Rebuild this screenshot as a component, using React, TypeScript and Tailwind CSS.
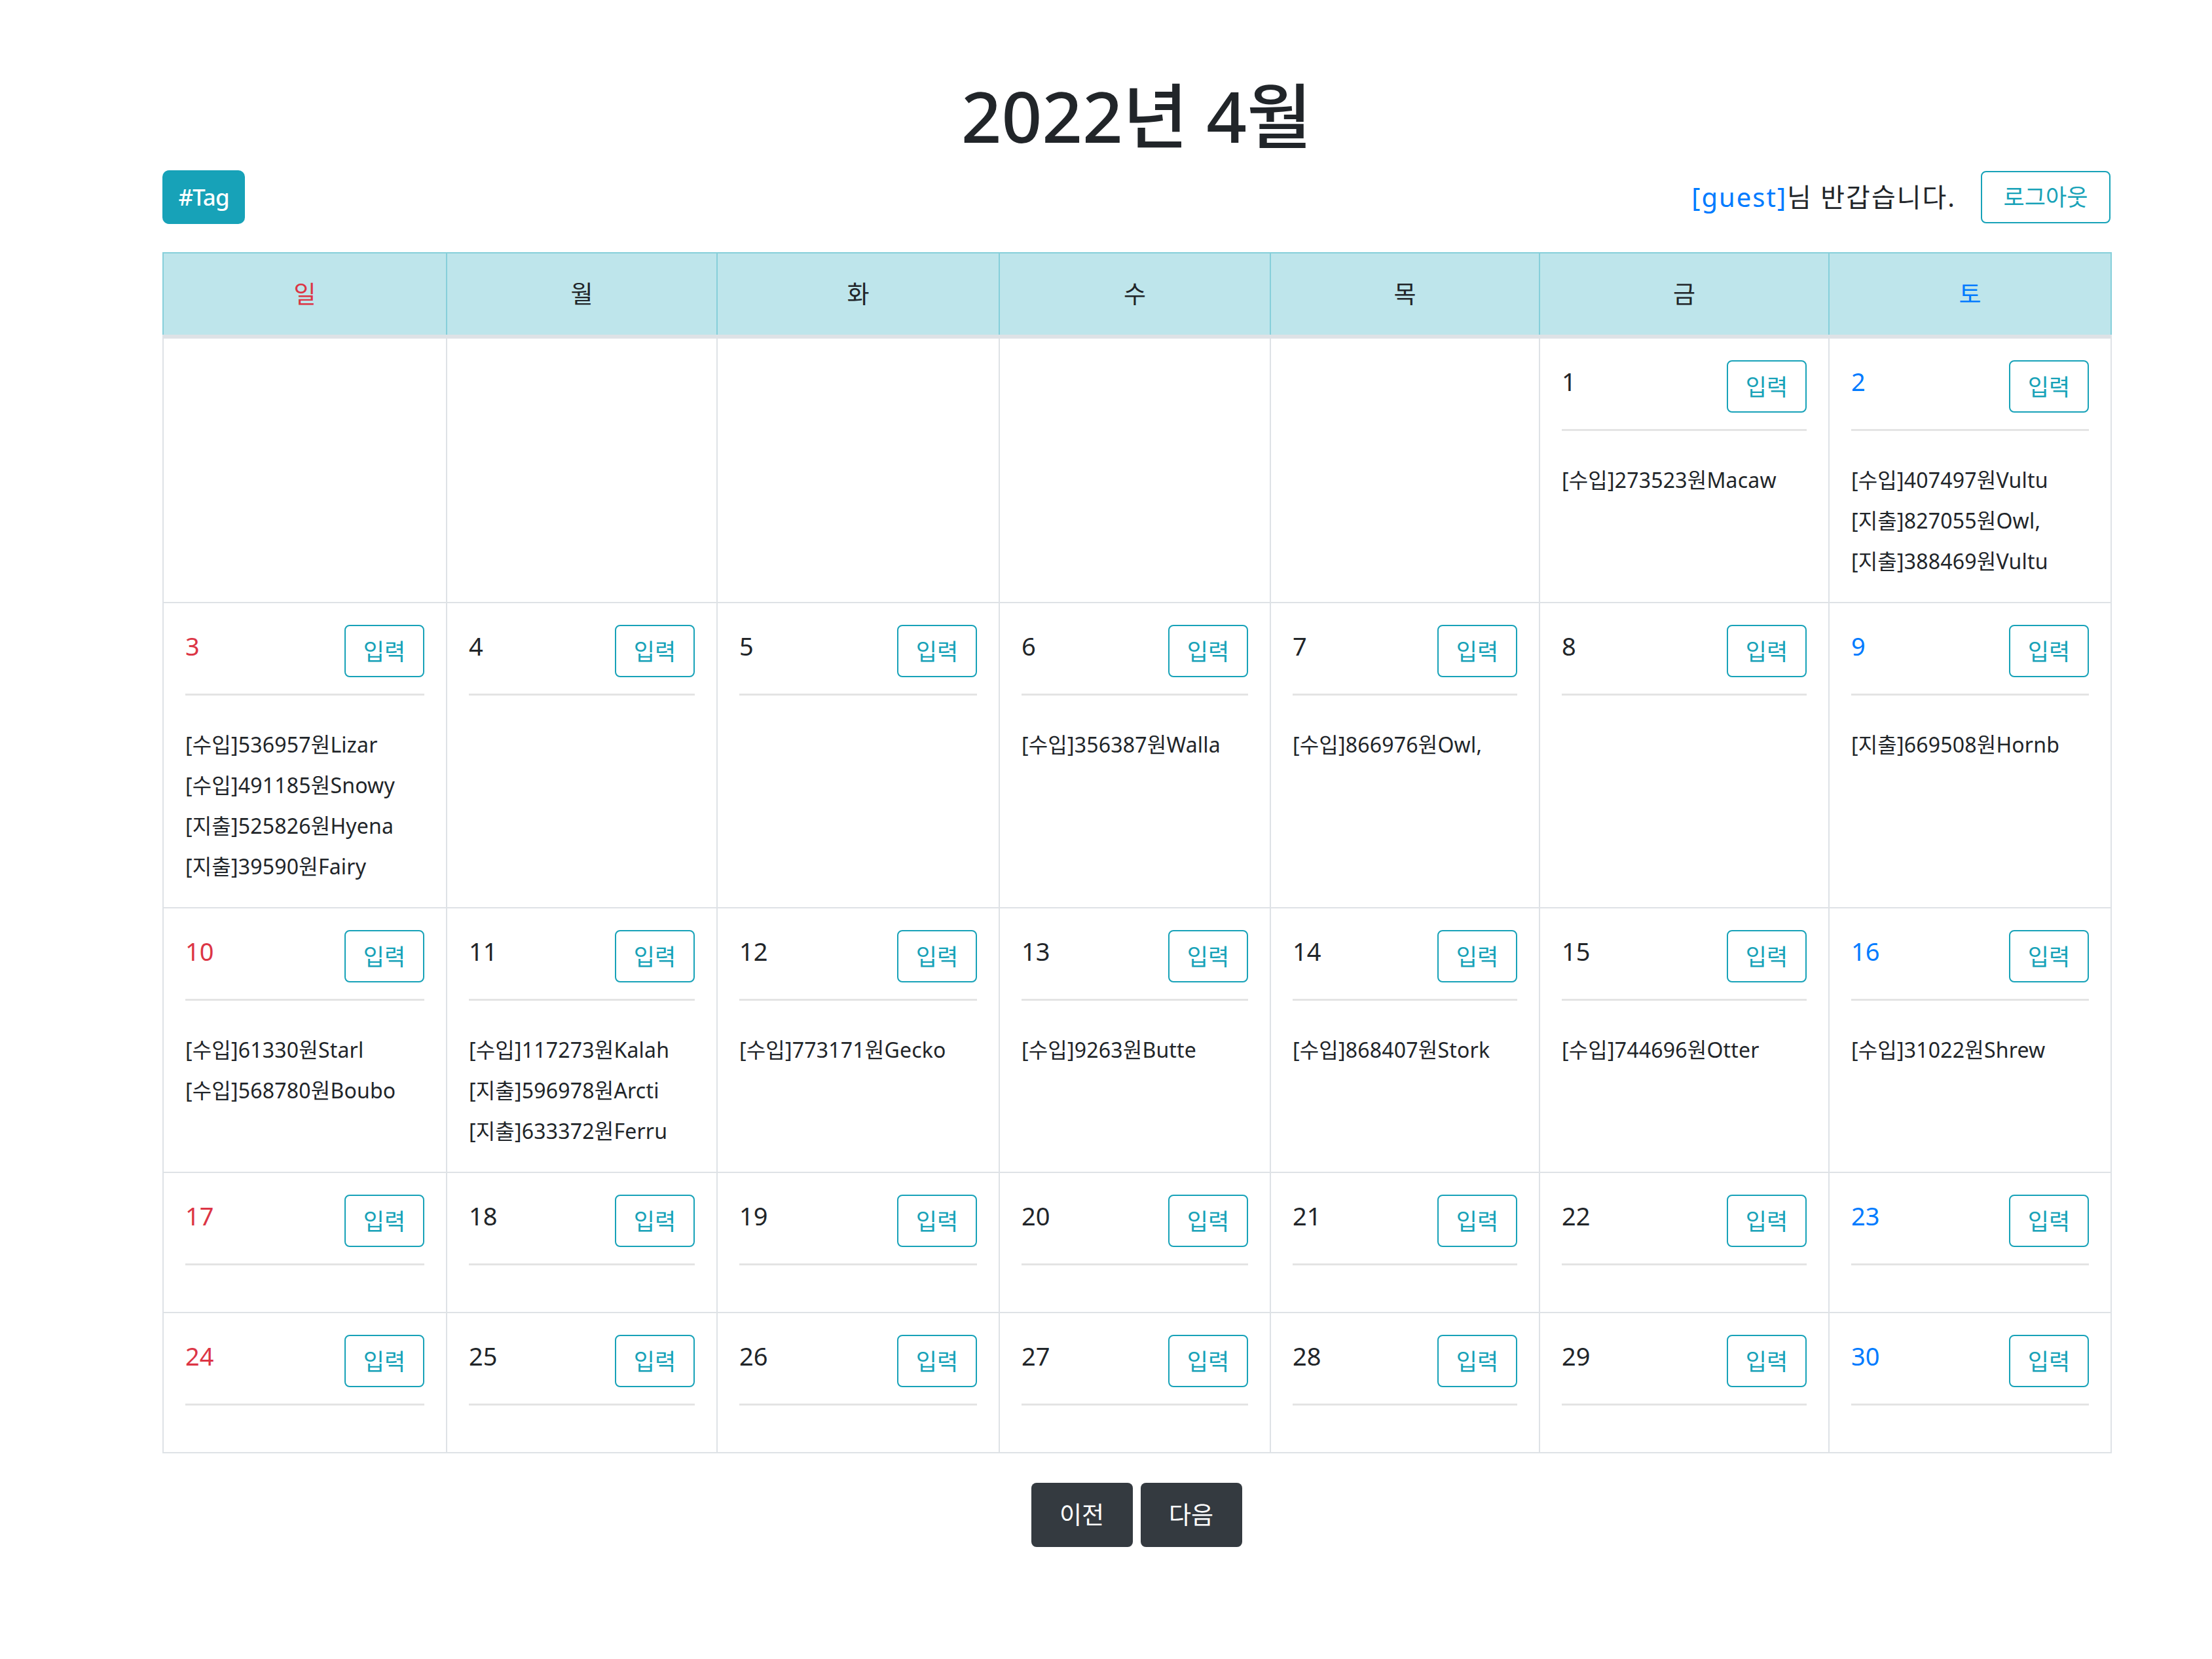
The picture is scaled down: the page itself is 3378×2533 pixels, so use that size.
import React from 'react';

interface Day {
  day: number;
  entries: string[];
}

const WEEKDAYS = ['일', '월', '화', '수', '목', '금', '토'];
const COL_WIDTHS = ['w-[433px]', 'w-[413px]', 'w-[431px]', 'w-[414px]', 'w-[411px]', 'w-[442px]', 'w-[431px]'];

const ENTRIES: Record<number, string[]> = {
  1: ['[수입]273523원Macaw'],
  2: ['[수입]407497원Vultu', '[지출]827055원Owl,', '[지출]388469원Vultu'],
  3: ['[수입]536957원Lizar', '[수입]491185원Snowy', '[지출]525826원Hyena', '[지출]39590원Fairy'],
  6: ['[수입]356387원Walla'],
  7: ['[수입]866976원Owl,'],
  9: ['[지출]669508원Hornb'],
  10: ['[수입]61330원Starl', '[수입]568780원Boubo'],
  11: ['[수입]117273원Kalah', '[지출]596978원Arcti', '[지출]633372원Ferru'],
  12: ['[수입]773171원Gecko'],
  13: ['[수입]9263원Butte'],
  14: ['[수입]868407원Stork'],
  15: ['[수입]744696원Otter'],
  16: ['[수입]31022원Shrew'],
};

// April 2022 starts on Friday
function buildWeeks(): (Day | null)[][] {
  const cells: (Day | null)[] = [];
  for (let i = 0; i < 5; i++) cells.push(null);
  for (let d = 1; d <= 30; d++) cells.push({ day: d, entries: ENTRIES[d] || [] });
  const weeks: (Day | null)[][] = [];
  for (let i = 0; i < cells.length; i += 7) weeks.push(cells.slice(i, i + 7));
  return weeks;
}

function dayColor(col: number) {
  if (col === 0) return 'text-[#dc3545]';
  if (col === 6) return 'text-[#007bff]';
  return 'text-[#212529]';
}

function DayCell({ day, col }: { day: Day | null; col: number }) {
  return (
    <td className="border-2 border-[#dee2e6] align-top pt-[33px] pb-[31px] px-[33px]">
      {day && (
        <>
          <div className="flex items-start justify-between">
            <span className={`text-[38px] leading-[57px] mt-[4px] ${dayColor(col)}`}>{day.day}</span>
            <button className="w-[122px] h-[80px] border-2 border-[#17a2b8] rounded-[8px] text-[#17a2b8] text-[35px] leading-none">
              입력
            </button>
          </div>
          <hr className="mt-[25px] mb-[40px] border-0 border-t-[3px] border-[#e4e4e4]" />
          {day.entries.length > 0 && (
            <div className="pt-[4px]">
              {day.entries.map((e, i) => (
                <div key={i} className="text-[32px] leading-[62px] tracking-[0.2px] text-[#212529] whitespace-nowrap">
                  {e}
                </div>
              ))}
            </div>
          )}
        </>
      )}
    </td>
  );
}

export default function App() {
  const weeks = buildWeeks();

  return (
    <div className="min-h-screen bg-white font-['Noto_Sans','Noto_Sans_CJK_KR',sans-serif] text-[#212529]">
      <div className="ml-[248px] w-[2975px] pt-[114px] pb-[160px]">
        <h1 className="text-center text-[108px] leading-[125px] font-medium">2022년 4월</h1>

        <div className="mt-[21px] flex items-center justify-between">
          <button className="w-[126px] h-[82px] bg-[#17a2b8] rounded-[10px] text-white text-[35px] font-medium tracking-[-1px]">
            #Tag
          </button>
          <div className="flex items-center gap-[38px]">
            <span className="text-[40px] tracking-[2px]">
              <span className="text-[#007bff]">[guest]</span>님 반갑습니다.
            </span>
            <button className="w-[198px] h-[80px] border-2 border-[#17a2b8] rounded-[8px] text-[#17a2b8] text-[35px]">
              로그아웃
            </button>
          </div>
        </div>

        <table className="mt-[43px] w-[2975px] table-fixed border-collapse">
          <colgroup>
            {COL_WIDTHS.map((w, i) => (
              <col key={i} className={w} />
            ))}
          </colgroup>
          <thead>
            <tr>
              {WEEKDAYS.map((d, i) => (
                <th
                  key={d}
                  className={`h-[128px] bg-[#bee5eb] border-2 border-[#86cfda] border-b-[6px] border-b-[#dee2e6] text-[37px] font-normal ${dayColor(i)}`}
                >
                  {d}
                </th>
              ))}
            </tr>
          </thead>
          <tbody>
            {weeks.map((week, wi) => (
              <tr key={wi}>
                {week.map((day, ci) => (
                  <DayCell key={ci} day={day} col={ci} />
                ))}
              </tr>
            ))}
          </tbody>
        </table>

        <div className="mt-[45px] flex justify-center gap-[12px]">
          <button className="w-[155px] h-[98px] bg-[#343a40] rounded-[8px] text-white text-[37px]">이전</button>
          <button className="w-[155px] h-[98px] bg-[#343a40] rounded-[8px] text-white text-[37px]">다음</button>
        </div>
      </div>
    </div>
  );
}
